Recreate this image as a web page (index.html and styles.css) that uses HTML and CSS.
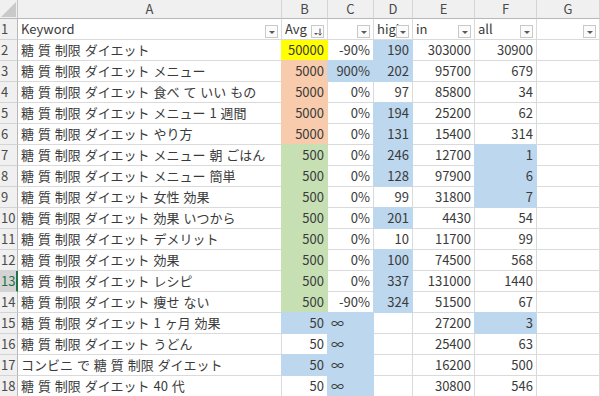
FILE: index.html
```html
<!DOCTYPE html>
<html lang="ja">
<head>
<meta charset="utf-8">
<title>Sheet</title>
<link rel="stylesheet" href="styles.css">
</head>
<body>
<div class="sheet">
  <div class="corner"><svg width="18" height="19" viewBox="0 0 18 19"><polygon points="1,17 16,17 16,2" fill="#c9c9c9"/></svg></div>
  <div class="ch">A</div><div class="ch">B</div><div class="ch">C</div><div class="ch">D</div><div class="ch">E</div><div class="ch">F</div><div class="ch">G</div>

  <div class="rh">1</div>
  <div class="c f">Keyword<span class="dd"><i class="tri"></i></span></div>
  <div class="c f">Avg<span class="dd"><svg width="11" height="11" viewBox="0 0 11 11"><polygon points="2,7 6,7 4,9" fill="#555"/><path d="M8 2.5v6.5M6.5 7.5L8 9.3 9.5 7.5" stroke="#555" stroke-width="1" fill="none"/></svg></span></div>
  <div class="c f"><span class="dd"><i class="tri"></i></span></div>
  <div class="c f">high<span class="dd"><i class="tri"></i></span></div>
  <div class="c f">in<span class="dd"><i class="tri"></i></span></div>
  <div class="c f">all<span class="dd"><i class="tri"></i></span></div>
  <div class="c f"><span class="dd"><i class="tri"></i></span></div>

  <div class="rh">2</div><div class="c k">糖 質 制限 ダイエット</div><div class="c n y">50000</div><div class="c n">-90%</div><div class="c n b">190</div><div class="c n">303000</div><div class="c n">30900</div><div class="c"></div>
  <div class="rh">3</div><div class="c k">糖 質 制限 ダイエット メニュー</div><div class="c n s">5000</div><div class="c n b">900%</div><div class="c n b">202</div><div class="c n">95700</div><div class="c n">679</div><div class="c"></div>
  <div class="rh">4</div><div class="c k">糖 質 制限 ダイエット 食べ て いい もの</div><div class="c n s">5000</div><div class="c n">0%</div><div class="c n">97</div><div class="c n">85800</div><div class="c n">34</div><div class="c"></div>
  <div class="rh">5</div><div class="c k">糖 質 制限 ダイエット メニュー 1 週間</div><div class="c n s">5000</div><div class="c n">0%</div><div class="c n b">194</div><div class="c n">25200</div><div class="c n">62</div><div class="c"></div>
  <div class="rh">6</div><div class="c k">糖 質 制限 ダイエット やり方</div><div class="c n s">5000</div><div class="c n">0%</div><div class="c n b">131</div><div class="c n">15400</div><div class="c n">314</div><div class="c"></div>
  <div class="rh">7</div><div class="c k">糖 質 制限 ダイエット メニュー 朝 ごはん</div><div class="c n g">500</div><div class="c n">0%</div><div class="c n b">246</div><div class="c n">12700</div><div class="c n b">1</div><div class="c"></div>
  <div class="rh">8</div><div class="c k">糖 質 制限 ダイエット メニュー 簡単</div><div class="c n g">500</div><div class="c n">0%</div><div class="c n b">128</div><div class="c n">97900</div><div class="c n b">6</div><div class="c"></div>
  <div class="rh">9</div><div class="c k">糖 質 制限 ダイエット 女性 効果</div><div class="c n g">500</div><div class="c n">0%</div><div class="c n">99</div><div class="c n">31800</div><div class="c n b">7</div><div class="c"></div>
  <div class="rh">10</div><div class="c k">糖 質 制限 ダイエット 効果 いつから</div><div class="c n g">500</div><div class="c n">0%</div><div class="c n b">201</div><div class="c n">4430</div><div class="c n">54</div><div class="c"></div>
  <div class="rh">11</div><div class="c k">糖 質 制限 ダイエット デメリット</div><div class="c n g">500</div><div class="c n">0%</div><div class="c n">10</div><div class="c n">11700</div><div class="c n">99</div><div class="c"></div>
  <div class="rh">12</div><div class="c k">糖 質 制限 ダイエット 効果</div><div class="c n g">500</div><div class="c n">0%</div><div class="c n b">100</div><div class="c n">74500</div><div class="c n">568</div><div class="c"></div>
  <div class="rh sel">13</div><div class="c k">糖 質 制限 ダイエット レシピ</div><div class="c n g">500</div><div class="c n">0%</div><div class="c n b">337</div><div class="c n">131000</div><div class="c n">1440</div><div class="c"></div>
  <div class="rh">14</div><div class="c k">糖 質 制限 ダイエット 痩せ ない</div><div class="c n g">500</div><div class="c n">-90%</div><div class="c n b">324</div><div class="c n">51500</div><div class="c n">67</div><div class="c"></div>
  <div class="rh">15</div><div class="c k">糖 質 制限 ダイエット 1 ヶ月 効果</div><div class="c n b">50</div><div class="c b">∞</div><div class="c"></div><div class="c n">27200</div><div class="c n b">3</div><div class="c"></div>
  <div class="rh">16</div><div class="c k">糖 質 制限 ダイエット うどん</div><div class="c n">50</div><div class="c b">∞</div><div class="c"></div><div class="c n">25400</div><div class="c n">63</div><div class="c"></div>
  <div class="rh">17</div><div class="c k">コンビニ で 糖 質 制限 ダイエット</div><div class="c n b">50</div><div class="c b">∞</div><div class="c"></div><div class="c n">16200</div><div class="c n">500</div><div class="c"></div>
  <div class="rh">18</div><div class="c k">糖 質 制限 ダイエット 40 代</div><div class="c n">50</div><div class="c b">∞</div><div class="c"></div><div class="c n">30800</div><div class="c n">546</div><div class="c"></div>
</div>
</body>
</html>
```
FILE: styles.css
```css
html, body {
  margin: 0;
  padding: 0;
  background: #ffffff;
  overflow: hidden;
}
body {
  width: 600px;
  height: 396px;
  font-family: "Noto Sans CJK JP", "Noto Sans", sans-serif;
  font-size: 13px;
  color: #3a3a3a;
}
.sheet {
  display: grid;
  grid-template-columns: 18px 264px 46px 46px 39px 62px 62px 63px;
  grid-template-rows: 19px repeat(18, 21px);
  width: 600px;
}
.sheet > div {
  box-sizing: border-box;
  overflow: hidden;
  white-space: nowrap;
}
.corner {
  background: #f0f0f0;
  border-right: 1px solid #c4c4c4;
  border-bottom: 1px solid #b8b8b8;
}
.corner svg {
  display: block;
}
.ch {
  background: #f0f0f0;
  border-right: 1px solid #d4d4d4;
  border-bottom: 1px solid #b8b8b8;
  color: #4a4a4a;
  text-align: center;
  line-height: 18px;
  font-size: 13px;
}
.rh {
  background: #f0f0f0;
  border-right: 1px solid #b8b8b8;
  border-bottom: 1px solid #d4d4d4;
  color: #4a4a4a;
  line-height: 20px;
  padding-left: 1px;
  font-size: 13px;
}
.rh.sel {
  background: #d3d3d3;
  color: #217346;
  border-right: 2px solid #217346;
}
.c {
  border-right: 1px solid #dadada;
  border-bottom: 1px solid #dadada;
  line-height: 20px;
  padding: 0 3px;
}
.k {
  word-spacing: 1px;
}
.n {
  text-align: right;
}
.f {
  position: relative;
}
.dd {
  position: absolute;
  right: 3px;
  bottom: 1px;
  width: 13px;
  height: 13px;
  box-sizing: border-box;
  border: 1px solid #c9c9c9;
  background: #fbfbfb;
  display: flex;
  align-items: center;
  justify-content: center;
}
.dd svg {
  display: block;
}
.tri {
  display: block;
  width: 0;
  height: 0;
  border-left: 3px solid transparent;
  border-right: 3px solid transparent;
  border-top: 3px solid #5a5a5a;
  margin-top: 1px;
}
.y {
  background: #ffff00;
  border-color: #ffff00;
  box-shadow: -1px -1px 0 0 #ffff00;
}
.s {
  background: #f8cbad;
  border-color: #f8cbad;
  box-shadow: -1px -1px 0 0 #f8cbad;
}
.g {
  background: #c6e0b4;
  border-color: #c6e0b4;
  box-shadow: -1px -1px 0 0 #c6e0b4;
}
.b {
  background: #bdd7ee;
  border-color: #bdd7ee;
  box-shadow: -1px -1px 0 0 #bdd7ee;
}
```
